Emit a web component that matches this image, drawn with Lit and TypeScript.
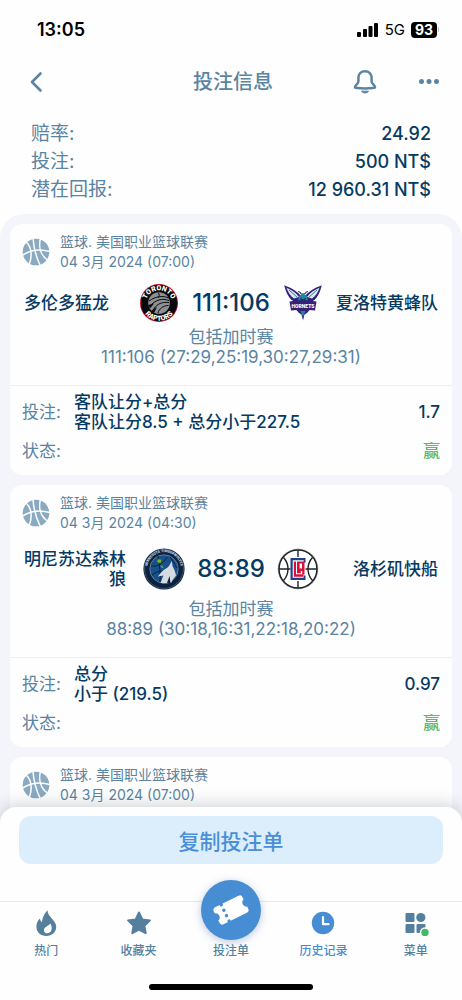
import { LitElement, html, svg, css, nothing } from "lit";
import { customElement, property } from "lit/decorators.js";

interface Team {
  name: string;
  logo: "raptors" | "hornets" | "wolves" | "clippers";
}

interface Bet {
  league: string;
  date: string;
  home?: Team;
  away?: Team;
  score?: string;
  periods?: string;
  market?: string[];
  odds?: string;
}

const BETS: Bet[] = [
  {
    league: "篮球. 美国职业篮球联赛",
    date: "04 3月 2024 (07:00)",
    home: { name: "多伦多猛龙", logo: "raptors" },
    away: { name: "夏洛特黄蜂队", logo: "hornets" },
    score: "111:106",
    periods: "111:106 (27:29,25:19,30:27,29:31)",
    market: ["客队让分+总分", "客队让分8.5 + 总分小于227.5"],
    odds: "1.7",
  },
  {
    league: "篮球. 美国职业篮球联赛",
    date: "04 3月 2024 (04:30)",
    home: { name: "明尼苏达森林狼", logo: "wolves" },
    away: { name: "洛杉矶快船", logo: "clippers" },
    score: "88:89",
    periods: "88:89 (30:18,16:31,22:18,20:22)",
    market: ["总分", "小于 (219.5)"],
    odds: "0.97",
  },
  { league: "篮球. 美国职业篮球联赛", date: "04 3月 2024 (07:00)" },
];

const LOGOS = {
  raptors: svg`
    <defs>
      <path id="rt" d="M8 25 A13.400 13.400 0 1 1 34 25"/>
      <path id="rb" d="M3.300 21 A17.700 17.700 0 0 0 38.700 21"/>
    </defs>
    <circle cx="21" cy="21" r="19" fill="#c8102e"/>
    <circle cx="21" cy="21" r="18.200" fill="#0a0a0c"/>
    <circle cx="21" cy="21" r="10.800" fill="#8d9093"/>
    <path d="M11 19c7-5 14-5.500 20-3M11.500 24.500c6-7 13-8.500 19.500-6M15 29c2-6 8-9.500 16-8.500M20 31c1-4 5-7.500 10.500-7.500M20.500 10.800c1 2 1 3.500 0 5" fill="none" stroke="#0a0a0c" stroke-width="1"/>
    <path d="M10 23l6-1.500-4 5zM13 29l6-4-3 6z" fill="#0a0a0c"/>
    <text class="mark" font-size="7" fill="#fff"><textPath href="#rt" startOffset="50%" text-anchor="middle">TORONTO</textPath></text>
    <text class="mark" font-size="7" fill="#fff"><textPath href="#rb" startOffset="50%" text-anchor="middle">RAPTORS</textPath></text>`,
  hornets: svg`
    <path d="M2.200 3.200C8 5.500 14 8 18.500 13.500L20 19 12 19.500C7.500 17.500 4 11 2.200 3.200Z" fill="#33217a"/>
    <path d="M39.800 3.200C34 5.500 28 8 23.500 13.500L22 19 30 19.500C34.500 17.500 38 11 39.800 3.200Z" fill="#33217a"/>
    <path d="M4.500 5.800C9.500 8 14 10.500 17 15l-5 1.500C8.500 14 6 10.500 4.500 5.800ZM37.500 5.800C32.500 8 28 10.500 25 15l5 1.500C33.500 14 36 10.500 37.500 5.800Z" fill="#dfe5ee"/>
    <path d="M7 8l9 8M35 8l-9 8" stroke="#1b8b9c" stroke-width="1" fill="none"/>
    <path d="M16 9.500c1.500 0 2.500 1 3.300 2.500h3.400c.8-1.500 1.800-2.500 3.300-2.500" stroke="#33217a" stroke-width="1.200" fill="none"/>
    <path d="M17 14l4-2.500 4 2.500 1 6H16Z" fill="#1b8b9c"/>
    <path d="M18 15.500l3 2 3-2-1 4h-4z" fill="#33217a"/>
    <path d="M13.500 27h15L25 31l-2.500 1.500L21 38.500 19.500 32.500 17 31Z" fill="#33217a"/>
    <path d="M18.500 29h5L21 35Z" fill="#1b8b9c"/>
    <path d="M7.500 19.500L21 17.800l13.500 1.700-1.500 9-12-1L9 28.500Z" fill="#33217a"/>
    <text class="mark" x="21" y="25.500" font-size="5" fill="#fff" text-anchor="middle">HORNETS</text>`,
  wolves: svg`
    <defs>
      <path id="wt" d="M6.200 29.500 A17 17 0 1 1 35.800 29.500"/>
    </defs>
    <circle cx="21" cy="21" r="20.600" fill="#0c2340"/>
    <circle cx="21" cy="21" r="19.400" fill="none" stroke="#6f8496" stroke-width=".5"/>
    <circle cx="21" cy="21" r="14.200" fill="#17508a" stroke="#8fa1b1" stroke-width=".6"/>
    <path d="M8 18c6 1 12-2 16-9M15 8c1 8 3 18 2 26M9 27c4-3 7-4 11-4M27 9c3 4 5 8 7 11" fill="none" stroke="#0c2340" stroke-width="1"/>
    <path d="M15.500 10.500l1.200 1.300 1.800-.3-.7 1.600.7 1.500-1.800-.1-1.300 1.100-.3-1.700-1.600-.9 1.600-.7zM17 17.500l1.500.5 1-.8v1.500l1.200.8-1.500.5z" fill="#78be20"/>
    <path d="M28.800 13l.8 5.500c2 3 3 6.500 3.400 9C31 30 29 32 28.500 34.500c-4 1-8 1-11 .5 1-3 2-5 3-7.500l-5.700 1 4.200-5c2-2.500 5.500-3 7-5.500z" fill="#d5dbe1"/>
    <path d="M24 35l2.500-7 1 7z" fill="#0c2340"/>
    <text class="mark" font-size="3.500" fill="#c9d2da"><textPath href="#wt" startOffset="50%" text-anchor="middle">MINNESOTA TIMBERWOLVES</textPath></text>`,
  clippers: svg`
    <circle cx="21" cy="21" r="20.400" fill="#b9bec2"/>
    <circle cx="21" cy="21" r="19" fill="#fff" stroke="#1d2429" stroke-width="1.500"/>
    <path d="M21 2v7M21 33v7M2 21h11.500M28.500 21H40" stroke="#1d2429" stroke-width="1.400"/>
    <path d="M6.500 9.500C12.500 16 12.500 26 6.500 32.500M35.500 9.500C29.500 16 29.500 26 35.500 32.500" fill="none" stroke="#1d2429" stroke-width="1.400"/>
    <path d="M13.500 10h15v4.500h-1.800v-2.300H15.700v17.600h11v-2.300h1.800V32h-15Z" fill="#1d428a"/>
    <path d="M16.800 13.500h2.200v12.800h7.500v2.400h-9.700z" fill="#d5133a"/>
    <path d="M20 13.500h7.500v13h-2.300V23h-1.400v2.300H20zM22.600 15.500v5h2.400v-5z" fill="#d5133a" fill-rule="evenodd"/>`,
};

const BALL = svg`
  <circle cx="14" cy="14" r="13.300" fill="#8aaac1"/>
  <g fill="none" stroke="#fefefe" stroke-width="1.500">
    <path d="M11 0C11.500 9 14 19 18.500 28"/>
    <path d="M0 17.500C8 12 18 10.500 28 13.500"/>
    <path d="M4 4C9 8 11 17 7 27"/>
    <path d="M18.500 0C16.500 8 18 17 26 22.500"/>
  </g>`;

const ICONS = {
  hot: svg`
    <path fill-rule="evenodd" d="M14.500.3c.2 3.200 1.600 5.400 4 7.900 2.900 3 4.700 5.300 4.700 8.600 0 5.500-4.300 9.200-9.900 9.200S3.400 22.300 3.400 16.800c0-3.300 1.200-6 3.500-8.300.2 1.800.8 3 2 3.700C9.500 7.500 11.400 3.300 14.500.3ZM17.300 13.500c-1.300 1.900-3.300 2.500-4.800 3.700-1.300 1-1.900 2.200-1.500 3.700.4 1.600 1.800 2.400 3.500 2.300 2.600-.2 4.200-2.300 4.200-5 0-1.800-.5-3.400-1.400-4.700Z"/>`,
  star: svg`
    <path stroke="currentColor" stroke-width="2" stroke-linejoin="round" d="M13 2.500l3.300 6.900 7.600 1-5.500 5.300 1.300 7.500L13 19.600l-6.700 3.600 1.300-7.500-5.500-5.300 7.600-1z"/>`,
  clock: svg`
    <circle cx="13" cy="13" r="11.200"/>
    <path d="M13 7v7.200h5.500" fill="none" stroke="#fff" stroke-width="2.200" stroke-linecap="round" stroke-linejoin="round"/>`,
  menu: svg`
    <rect x="2.500" y="3" width="9" height="9" rx="1"/>
    <circle cx="17.800" cy="7.500" r="4.600"/>
    <rect x="2.500" y="14" width="9" height="9" rx="1"/>
    <rect x="13.500" y="14" width="9" height="9" rx="1"/>
    <circle cx="22" cy="22.500" r="5.200" fill="#fefefe"/>
    <circle cx="22" cy="22.500" r="3.700" fill="#45b865"/>`,
};

@customElement("bet-card")
export class BetCard extends LitElement {
  @property({ attribute: false }) bet!: Bet;

  static styles = css`
    :host {
      display: block;
      background: #fefefe;
      border-radius: 12px;
      color: #5a84a2;
    }
    .head {
      display: flex;
      align-items: center;
      gap: 10px;
      padding: 8px 12px 0;
      font-size: 14px;
      line-height: 20px;
    }
    .ball {
      width: 28px;
      height: 28px;
    }
    .match {
      display: grid;
      grid-template-columns: 1fr auto 1fr;
      align-items: center;
      min-height: 39px;
      margin-top: 11px;
      padding: 0 14px;
    }
    .team {
      box-sizing: border-box;
      max-width: 6em;
      padding: 5px 0;
      font-size: 17px;
      line-height: 20px;
      font-weight: 500;
      text-align: right;
      color: #053a63;
    }
    .away {
      justify-self: end;
    }
    .home {
      justify-self: start;
    }
    .center {
      display: flex;
      align-items: center;
      gap: 12px;
    }
    .logo {
      width: 42px;
      height: 42px;
      margin: -2px 0;
      overflow: visible;
    }
    .mark {
      font-family: Roboto, "Liberation Sans", sans-serif;
      font-weight: 900;
    }
    .score {
      font-size: 24px;
      line-height: 28px;
      font-weight: 500;
      color: #053a63;
    }
    .detail {
      margin: 5px 0 0;
      padding-bottom: 18px;
      border-bottom: 1px solid #eceff6;
      font-size: 17px;
      line-height: 20px;
      text-align: center;
    }
    .facts {
      display: grid;
      gap: 9px;
      margin: 0;
      padding: 6px 12px 14px;
      font-size: 17px;
      line-height: 20px;
    }
    .fact {
      display: grid;
      grid-template-columns: 52px 1fr auto;
      align-items: center;
    }
    .fact dd {
      margin: 0;
      font-weight: 500;
      color: #053a63;
    }
    .fact .odds {
      font-size: 17px;
    }
    .fact .won {
      grid-column: 3;
      color: #52bb70;
    }
  `;

  render() {
    const b = this.bet;
    return html`
      <div class="head">
        <svg class="ball" viewBox="0 0 28 28" aria-hidden="true">${BALL}</svg>
        <div>
          <div>${b.league}</div>
          <div>${b.date}</div>
        </div>
      </div>
      ${b.home && b.away
        ? html`
            <div class="match">
              <div class="team home">${b.home.name}</div>
              <div class="center">
                <svg class="logo" viewBox="0 0 42 42" aria-hidden="true">${LOGOS[b.home.logo]}</svg>
                <div class="score">${b.score}</div>
                <svg class="logo" viewBox="0 0 42 42" aria-hidden="true">${LOGOS[b.away.logo]}</svg>
              </div>
              <div class="team away">${b.away.name}</div>
            </div>
            <p class="detail">包括加时赛<br />${b.periods}</p>
            <dl class="facts">
              <div class="fact">
                <dt>投注:</dt>
                <dd>${b.market?.map((line) => html`<div>${line}</div>`)}</dd>
                <dd class="odds">${b.odds}</dd>
              </div>
              <div class="fact">
                <dt>状态:</dt>
                <dd class="won">赢</dd>
              </div>
            </dl>
          `
        : nothing}
    `;
  }
}

@customElement("app-root")
export class AppRoot extends LitElement {
  static styles = css`
    :host {
      display: flex;
      flex-direction: column;
      height: 100vh;
      overflow: hidden;
      background: #fefefe;
      font-family: Inter, "Noto Sans CJK SC", sans-serif;
      color: #5a84a2;
    }
    button {
      display: block;
      border: 0;
      background: none;
      padding: 0;
      font: inherit;
      color: inherit;
      cursor: pointer;
    }
    .status {
      display: flex;
      align-items: center;
      height: 59px;
      padding: 0 23px 0 37px;
      color: #000;
    }
    .time {
      flex: 1;
      font-size: 18px;
      font-weight: 600;
    }
    .signal {
      width: 22px;
      height: 14px;
    }
    .net {
      margin: 0 6px;
      font-size: 15px;
    }
    .battery {
      width: 26px;
      border-radius: 4px;
      background: #000;
      color: #fff;
      font-size: 14px;
      line-height: 16px;
      font-weight: 700;
      text-align: center;
    }
    .nub {
      width: 1px;
      height: 5px;
      margin-left: 1px;
      border-radius: 0 2px 2px 0;
      background: #b5b5b5;
    }
    .bar {
      display: grid;
      grid-template-columns: 1fr auto 1fr;
      align-items: center;
      height: 46px;
      padding: 0 20px 0 24px;
    }
    .bar h1 {
      margin: 0;
      font-size: 20px;
      line-height: 28px;
      font-weight: 500;
    }
    .icon {
      display: block;
      width: 26px;
      height: 26px;
    }
    .actions {
      display: flex;
      justify-content: flex-end;
      gap: 38px;
    }
    .summary {
      margin: 0;
      padding: 15px 31px 10px;
    }
    .row {
      display: flex;
      justify-content: space-between;
      font-size: 19px;
      line-height: 28px;
    }
    .row dd {
      margin: 0;
      font-size: 18px;
      font-weight: 500;
      color: #053a63;
    }
    .list {
      flex: 1;
      min-height: 0;
      overflow: hidden;
      display: flex;
      flex-direction: column;
      gap: 10px;
      padding: 10px 10px 0;
      border-radius: 24px 24px 0 0;
      background: #f3f5fa;
    }
    .card {
      flex: none;
    }
    .card:last-child {
      flex: 1 0 auto;
    }
    .sheet {
      position: relative;
      margin-top: -16px;
      border-radius: 16px 16px 0 0;
      background: #fefefe;
      box-shadow: 0 -3px 16px rgba(40, 50, 70, 0.2);
    }
    .copy {
      width: calc(100% - 38px);
      height: 48px;
      margin: 0 19px;
      border-radius: 12px;
      background: #dceefb;
      color: #4a8fd6;
      font-size: 21px;
      font-weight: 500;
    }
    .sheet-body {
      padding: 9px 0 37px;
    }
    .tabs {
      display: grid;
      grid-template-columns: repeat(5, 1fr);
      border-top: 1px solid #e4ebf3;
      padding-top: 8px;
    }
    .tab {
      display: flex;
      flex-direction: column;
      align-items: center;
      gap: 6px;
      font-size: 12px;
      line-height: 18px;
      font-weight: 500;
      color: #547f9d;
      fill: currentColor;
      text-decoration: none;
    }
    .active {
      color: #478dd3;
    }
    .fab {
      width: 60px;
      height: 60px;
      margin: -30px 0 -4px;
      border-radius: 50%;
      background: #478dd3;
      box-shadow: 0 2px 8px rgba(60, 100, 160, 0.35);
    }
    .home {
      width: 164px;
      height: 6px;
      margin: 24px auto 10px;
      border-radius: 3px;
      background: #000;
    }
  `;

  private tab(label: string, icon: keyof typeof ICONS, active = false) {
    return html`<a class="tab ${active ? "active" : ""}" href="#${icon}">
      <svg class="icon" viewBox="0 0 26 26" aria-hidden="true">${ICONS[icon]}</svg>
      <span>${label}</span>
    </a>`;
  }

  private row(label: string, value: string) {
    return html`<div class="row"><dt>${label}</dt><dd>${value}</dd></div>`;
  }

  render() {
    return html`
      <div class="status">
        <span class="time">13:05</span>
        <svg class="signal" viewBox="0 0 22 14" aria-hidden="true">
          <rect x="0" y="9" width="4" height="5" rx="1" />
          <rect x="6" y="6" width="4" height="8" rx="1" />
          <rect x="11.500" y="3" width="4" height="11" rx="1" />
          <rect x="17" y="0" width="4" height="14" rx="1" />
        </svg>
        <span class="net">5G</span>
        <span class="battery">93</span>
        <span class="nub"></span>
      </div>
      <header class="bar">
        <div>
          <button aria-label="返回">
            <svg class="icon" viewBox="0 0 26 26" fill="none" stroke="currentColor" stroke-width="2.600" stroke-linecap="round" stroke-linejoin="round">
              <path d="M16.500 4.500L8 13l8.500 8.500" />
            </svg>
          </button>
        </div>
        <h1>投注信息</h1>
        <div class="actions">
          <button aria-label="通知">
            <svg class="icon" viewBox="0 0 26 26" fill="none" stroke="currentColor" stroke-width="2.500" stroke-linejoin="round">
              <path d="M13 2.200c-4 0-6.600 3-6.600 6.800v3.500c0 2.200-3.400 3.800-3.400 5.500 0 .8 1 1 2 1 5.300.6 10.700.6 16 0 1 0 2-.2 2-1 0-1.700-3.400-3.300-3.400-5.500V9c0-3.800-2.600-6.800-6.600-6.800Z" />
              <path d="M9.500 22.200c1 2.300 6 2.300 7 0Z" fill="currentColor" stroke-width="1" />
            </svg>
          </button>
          <button aria-label="更多">
            <svg class="icon" viewBox="0 0 26 26" fill="currentColor">
              <circle cx="5.500" cy="12.500" r="2.500" />
              <circle cx="13" cy="12.500" r="2.500" />
              <circle cx="20.500" cy="12.500" r="2.500" />
            </svg>
          </button>
        </div>
      </header>
      <dl class="summary">
        ${this.row("赔率:", "24.92")} ${this.row("投注:", "500 NT$")}
        ${this.row("潜在回报:", "12 960.31 NT$")}
      </dl>
      <main class="list">
        ${BETS.map((bet) => html`<bet-card class="card" .bet=${bet}></bet-card>`)}
      </main>
      <footer class="sheet">
        <div class="sheet-body"><button class="copy">复制投注单</button></div>
        <nav class="tabs">
          ${this.tab("热门", "hot")} ${this.tab("收藏夹", "star")}
          <a class="tab" href="#slip">
            <svg class="fab" viewBox="0 0 60 60" aria-hidden="true">
              <g transform="rotate(-26 30 30)">
                <path fill="#fff" d="M17 20.500h26a3 3 0 0 1 3 3v2.500a4.200 4.200 0 0 0 0 8v2.500a3 3 0 0 1-3 3H17a3 3 0 0 1-3-3V34a4.200 4.200 0 0 0 0-8v-2.500a3 3 0 0 1 3-3Z" />
                <path d="M23.500 21v19" stroke="#478dd3" stroke-width="3.400" stroke-linecap="round" stroke-dasharray="0.100 5.900" />
              </g>
            </svg>
            <span>投注单</span>
          </a>
          ${this.tab("历史记录", "clock", true)} ${this.tab("菜单", "menu")}
        </nav>
        <div class="home"></div>
      </footer>
    `;
  }
}
